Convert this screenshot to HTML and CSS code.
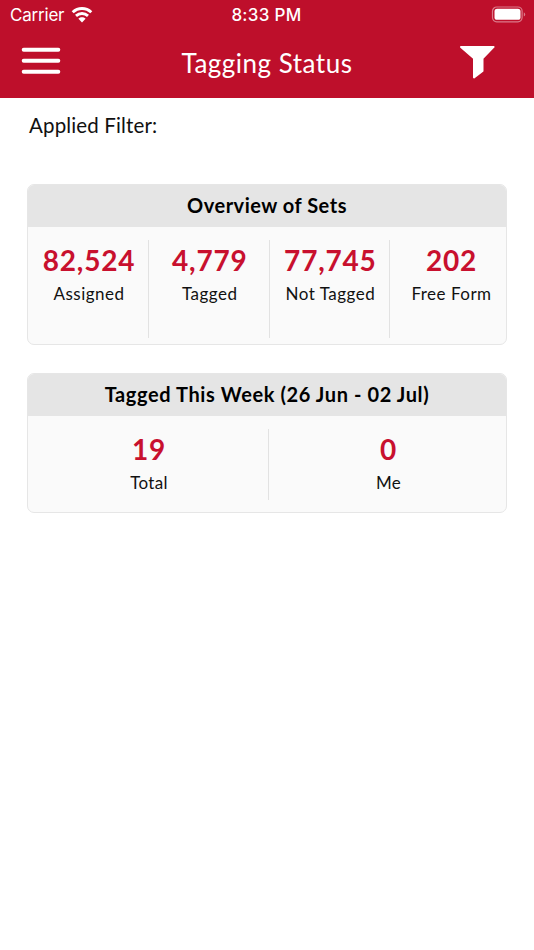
FILE: index.html
```html
<!DOCTYPE html>
<html lang="en">
<head>
  <meta charset="utf-8">
  <title>Tagging Status</title>
  <link rel="stylesheet" href="styles.css">
</head>
<body>
  <header class="header">
    <div class="status-bar">
      <div class="carrier">
        <span class="carrier-name">Carrier</span>
        <svg class="wifi" width="22" height="16" viewBox="0 0 22 16">
          <path d="M1.7 5.3C7 .3 15 .3 20.3 5.3M5 8.9C8.5 5.7 13.5 5.7 17 8.9" fill="none" stroke="#fff" stroke-width="2.9"/>
          <path d="M7.4 11.7C9.5 9.8 12.5 9.8 14.6 11.7L11 15.4Z" fill="#fff"/>
        </svg>
      </div>
      <span class="time">8:33 PM</span>
      <svg class="battery" width="35" height="18" viewBox="0 0 35 18">
        <rect x="1.5" y="1" width="29.6" height="14.8" rx="4.2" fill="none" stroke="#fff" stroke-opacity=".45" stroke-width="1.2"/>
        <rect x="3.5" y="2.8" width="26" height="11" rx="2.6" fill="#fff"/>
        <path d="M32.8 6.2Q34.2 7 34.2 8.4T32.8 10.6Z" fill="#fff" fill-opacity=".45"/>
      </svg>
    </div>
    <div class="nav-bar">
      <button class="nav-btn" aria-label="Menu">
        <svg width="40" height="30" viewBox="0 0 40 30">
          <path d="M2.7 2.7H37.3M2.7 13.7H37.3M2.7 24.8H37.3" stroke="#fff" stroke-width="4" stroke-linecap="round"/>
        </svg>
      </button>
      <h1 class="title">Tagging Status</h1>
      <button class="nav-btn" aria-label="Filter">
        <svg width="38" height="36" viewBox="0 0 38 36">
          <path d="M2 2.9H34.6L23.5 14.3V27L15 33.5V14.3Z" fill="#fff" stroke="#fff" stroke-width="2" stroke-linejoin="round"/>
        </svg>
      </button>
    </div>
  </header>

  <main class="content">
    <p class="filter">Applied Filter:</p>

    <section class="card overview">
      <h2 class="card-title">Overview of Sets</h2>
      <div class="stats">
        <div class="stat">
          <span class="number">82,524</span>
          <span class="label">Assigned</span>
        </div>
        <div class="stat">
          <span class="number">4,779</span>
          <span class="label">Tagged</span>
        </div>
        <div class="stat">
          <span class="number">77,745</span>
          <span class="label">Not Tagged</span>
        </div>
        <div class="stat">
          <span class="number">202</span>
          <span class="label">Free Form</span>
        </div>
      </div>
    </section>

    <section class="card week">
      <h2 class="card-title">Tagged This Week (26 Jun - 02 Jul)</h2>
      <div class="stats">
        <div class="stat">
          <span class="number">19</span>
          <span class="label">Total</span>
        </div>
        <div class="stat">
          <span class="number">0</span>
          <span class="label">Me</span>
        </div>
      </div>
    </section>
  </main>
</body>
</html>
```
FILE: styles.css
```css
* {
  box-sizing: border-box;
}

body {
  margin: 0;
  background-color: #fff;
  color: #111;
  font-family: Lato, sans-serif;
}

.header {
  height: 98px;
  background-color: #be0f2b;
  color: #fff;
}

.status-bar {
  display: grid;
  grid-template-columns: 1fr auto 1fr;
  align-items: center;
  height: 30px;
  padding: 0 8px 0 10px;
  font-family: Inter, sans-serif;
  font-size: 17px;
}

.carrier {
  display: flex;
  align-items: center;
  gap: 7px;
}

.carrier-name {
  letter-spacing: -0.2px;
}

.time {
  margin-right: 3px;
  font-weight: 500;
  font-size: 17px;
  letter-spacing: 0.3px;
}

.battery {
  justify-self: end;
}

.nav-bar {
  display: grid;
  grid-template-columns: 40px 1fr 40px;
  align-items: center;
  height: 64px;
  padding: 0 35px 0 21px;
}

.nav-btn {
  display: flex;
  padding: 0;
  border: none;
  background-color: transparent;
  cursor: pointer;
}

.title {
  margin: 0;
  padding: 2px 0 0 14px;
  font-size: 26px;
  font-weight: 400;
  letter-spacing: 0.5px;
  text-align: center;
}

.content {
  padding: 0 27px;
}

.filter {
  margin: 0;
  padding: 15px 2px 0;
  height: 86px;
  font-size: 20.5px;
  line-height: 24px;
  letter-spacing: 0.15px;
}

.card {
  border: 1.5px solid #e6e6e6;
  border-radius: 7px;
  background-color: #fafafa;
  overflow: hidden;
}

.overview {
  height: 161px;
  margin-bottom: 28px;
}

.week {
  height: 140px;
}

.card-title {
  margin: 0;
  height: 42px;
  background-color: #e5e5e5;
  color: #000;
  font-size: 20px;
  font-weight: 700;
  letter-spacing: 0.5px;
  line-height: 40px;
  text-align: center;
}

.week .card-title {
  letter-spacing: 0.6px;
}

.stats {
  display: flex;
  padding-top: 13px;
}

.stat {
  flex: 1;
  display: flex;
  flex-direction: column;
  align-items: center;
  padding-left: 2px;
  border-right: 1.5px solid #e2e2e2;
}

.stat:last-child {
  border-right: none;
}

.overview .stat {
  flex: 0 0 120.6px;
  height: 98px;
}

.overview .stat:first-child {
  flex-basis: 121px;
}

.week .stat {
  height: 71px;
}

.week .stat:first-child {
  flex: 0 0 241px;
}

.number {
  color: #c8102e;
  font-size: 28px;
  font-weight: 700;
  letter-spacing: 0.8px;
  line-height: 40px;
}

.label {
  font-size: 17px;
  letter-spacing: 0.5px;
  line-height: 27px;
  white-space: nowrap;
}

.week .label {
  letter-spacing: 0.3px;
}
```
